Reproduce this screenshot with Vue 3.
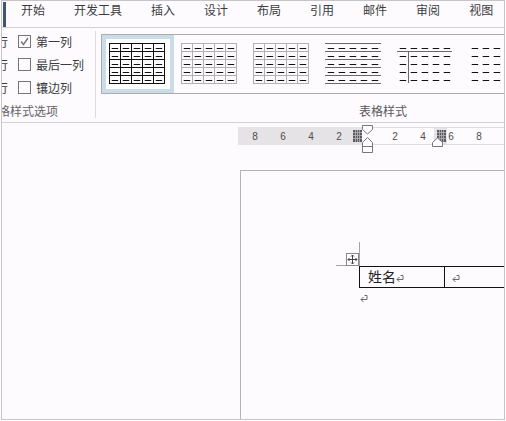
<script setup>
import { ref } from 'vue'

const tabs = ['开始', '开发工具', '插入', '设计', '布局', '引用', '邮件', '审阅', '视图']

const options = ref([
  { label: '第一列', checked: true },
  { label: '最后一列', checked: false },
  { label: '镶边列', checked: false },
])

const styles = ['grid', 'light', 'light', 'rows', 'corner', 'plain']
const selected = ref(0)

const ticks = [8, 6, 4, 2, '', 2, 4, 6, 8]

const range = (n) => Array.from({ length: n }, (_, i) => i)
const dashes = range(5)
  .map((r) => range(5).map((c) => `M${c * 11 + 2.7} ${r * 8 + 5.5}h6.500`).join(''))
  .join('')
const hLines = range(6).map((r) => `M0 ${r * 8 + 0.5}h56`).join('')
const vLines = range(6).map((c) => `M${c * 11 + 0.5} 0v41`).join('')

const linePaths = {
  grid: hLines + vLines,
  light: hLines + vLines,
  rows: hLines,
  corner: 'M0 8.5h55M11.5 8v32',
  plain: '',
}
</script>

<template>
  <div class="window">
    <nav class="tabs">
      <span class="tabs__file"></span>
      <a v-for="tab in tabs" :key="tab" class="tabs__item">{{ tab }}</a>
    </nav>

    <section class="ribbon">
      <div class="options">
        <div v-for="(option, i) in options" :key="i" class="options__row">
          <span class="options__clipped">行</span>
          <span class="options__box" @click="option.checked = !option.checked">
            <svg v-if="option.checked" width="11" height="11" viewBox="0 0 11 11">
              <path d="M2 5.5l2.500 3L9 2" fill="none" stroke="#777" stroke-width="1.4" />
            </svg>
          </span>
          <span>{{ option.label }}</span>
        </div>
        <div class="options__title"><span>表格样式选项</span></div>
      </div>

      <div class="styles">
        <div class="gallery">
          <div
            v-for="(style, i) in styles"
            :key="i"
            class="gallery__item"
            :class="[`gallery__item--${style}`, { 'gallery__item--selected': i === selected }]"
            @click="selected = i"
          >
            <svg width="56" height="41" viewBox="0 0 56 41">
              <path class="gallery__lines" :d="linePaths[style]" />
              <path class="gallery__dashes" :d="dashes" />
            </svg>
          </div>
        </div>
        <div class="styles__title">表格样式</div>
      </div>
    </section>

    <div class="ruler">
      <div class="ruler__margin"></div>
      <div class="ruler__body"></div>
      <div class="ruler__ticks">
        <span v-for="(tick, i) in ticks" :key="i">{{ tick }}</span>
      </div>
      <svg class="ruler__markers" width="100" height="30" viewBox="0 0 100 30">
        <rect x="82" y="4" width="13" height="16" fill="#e3e2e5" />
        <path d="M1 6h9v12h-9zM85 6h9v12h-9z" fill="#5c5a5e" />
        <path
          d="M3.500 6v12M5.500 6v12M7.500 6v12M1 8.500h9M1 11.500h9M1 14.500h9M87.500 6v12M89.500 6v12M91.500 6v12M85 8.500h9M85 11.500h9M85 14.500h9"
          stroke="#b5b4b7"
          stroke-width=".8"
        />
        <g fill="#fefdff" stroke="#77767a">
          <path d="M10.500 1.500h10v4l-5 4.500l-5-4.500z" />
          <path d="M10.500 28.500v-10l5-5l5 5v10zM10.500 22.500h10" />
          <path d="M80.500 22.500v-4l5-4.500l5 4.500v4z" />
        </g>
      </svg>
    </div>

    <main class="workspace">
      <div class="page">
        <svg class="page__handle" width="25" height="25" viewBox="0 0 25 25">
          <path d="M23.500 0v24M0 23.500h24" stroke="#a5a3a7" />
          <rect x="10.500" y="11.500" width="12" height="12" fill="#fefdff" stroke="#8a898c" />
          <path
            d="M16.500 13v9M12 17.500h9M15 14.500l1.500-1.500l1.500 1.500M15 20.500l1.500 1.500l1.500-1.500M13.500 16l-1.500 1.500l1.500 1.500M19.500 16l1.500 1.500l-1.500 1.500"
            fill="none"
            stroke="#444"
          />
        </svg>
        <div class="table">
          <div class="table__cell table__cell--name">
            <span>姓名</span>
            <svg class="mark" width="8" height="8" viewBox="0 0 8 8">
              <path d="M4.500 .5h2.500v4h-6M3.500 2l-2.500 2.500l2.500 2.500" />
            </svg>
          </div>
          <div class="table__cell">
            <svg class="mark" width="8" height="8" viewBox="0 0 8 8">
              <path d="M4.500 .5h2.500v4h-6M3.500 2l-2.500 2.500l2.500 2.500" />
            </svg>
          </div>
        </div>
        <svg class="mark mark--end" width="8" height="8" viewBox="0 0 8 8">
          <path d="M4.500 .5h2.500v4h-6M3.500 2l-2.500 2.500l2.500 2.500" />
        </svg>
      </div>
    </main>
  </div>
</template>

<style>
body {
  background: #fff;
}
</style>

<style scoped>
.window {
  box-sizing: border-box;
  display: flex;
  flex-direction: column;
  width: 504px;
  height: 420px;
  margin-left: 1px;
  border: 1px solid #c6c4c8;
  background: #fdfbfe;
  color: #3c3b3e;
  font-family: 'Liberation Sans', 'Noto Sans CJK SC', sans-serif;
  font-size: 12px;
  overflow: hidden;
}

/* Tabs */
.tabs {
  display: flex;
  flex-shrink: 0;
  gap: 29px;
  height: 26px;
  border-bottom: 1px solid #d3d1d5;
  line-height: 21px;
  white-space: nowrap;
}

.tabs__file {
  width: 3px;
  height: 25px;
  margin: 1px -14px 0 1px;
  background: #3d5576;
}

/* Ribbon */
.ribbon {
  display: flex;
  flex-shrink: 0;
  height: 94px;
  border-bottom: 1px solid #d3d1d5;
}

.options {
  box-sizing: border-box;
  flex-shrink: 0;
  width: 94px;
  height: 87px;
  margin-top: 3px;
  border-right: 1px solid #dddbdf;
}

.options__row {
  display: flex;
  align-items: center;
  height: 23px;
  white-space: nowrap;
}

.options__row:first-child {
  margin-top: -1px;
}

.options__clipped {
  display: flex;
  justify-content: flex-end;
  width: 6px;
  overflow: hidden;
}

.options__box {
  box-sizing: border-box;
  display: flex;
  width: 13px;
  height: 13px;
  margin: 0 5px 0 10px;
  border: 1px solid #777579;
}

.options__title {
  display: flex;
  justify-content: flex-end;
  width: 56px;
  margin-top: 3px;
  overflow: hidden;
  color: #656367;
  line-height: 20px;
  white-space: nowrap;
}

.styles {
  flex: 1;
  min-width: 0;
  padding: 6px 0 0 5px;
}

.gallery {
  box-sizing: border-box;
  display: flex;
  height: 60px;
  border: 1px solid #adabb0;
  border-right: none;
  overflow: hidden;
}

.gallery__item {
  box-sizing: border-box;
  flex: 0 0 72px;
  height: 58px;
  padding: 8px 0 0 7px;
}

.gallery__item--selected {
  padding: 4px 0 0 3px;
  border: 4px solid #c9dce7;
  background: #fff;
}

.gallery__item svg {
  display: block;
}

.gallery__lines {
  fill: none;
  stroke: #b2b0b4;
}

.gallery__item--grid .gallery__lines {
  stroke: #111;
}

.gallery__item--rows .gallery__lines,
.gallery__item--corner .gallery__lines {
  stroke: #69676b;
}

.gallery__dashes {
  stroke: #111;
  stroke-width: 1.1;
}

.styles__title {
  margin-top: 8px;
  padding-left: 258px;
  color: #59575b;
  line-height: 20px;
}

/* Ruler */
.ruler {
  position: relative;
  display: flex;
  flex-shrink: 0;
  height: 18px;
  margin: 4px 0 0 236px;
}

.ruler__margin {
  width: 124px;
  background: #e5e3e6;
}

.ruler__body {
  box-sizing: border-box;
  flex: 1;
  border: solid #dfdde1;
  border-width: 1px 0;
}

.ruler__ticks {
  position: absolute;
  inset: 0;
  display: flex;
  padding-left: 3px;
  color: #4d4b4f;
  font-size: 10px;
  line-height: 19px;
}

.ruler__ticks span {
  flex: 0 0 28px;
  text-align: center;
}

.ruler__markers {
  position: absolute;
  top: -3px;
  left: 114px;
}

/* Document */
.workspace {
  flex: 1;
  min-height: 0;
  padding: 25px 0 0 238px;
}

.page {
  position: relative;
  box-sizing: border-box;
  height: 100%;
  padding: 95px 0 0 118px;
  border: solid #b5b3b7;
  border-width: 1px 0 0 1px;
}

.page__handle {
  position: absolute;
  top: 71px;
  left: 95px;
}

.table {
  position: relative;
  display: flex;
  box-sizing: border-box;
  height: 22px;
  border: 1px solid #111;
  border-right: none;
}

.table__cell {
  display: flex;
  align-items: center;
  padding-left: 7px;
}

.table__cell--name {
  box-sizing: border-box;
  width: 85px;
  padding-left: 8px;
  border-right: 1px solid #111;
  color: #222;
  font-size: 14px;
  line-height: 20px;
}

.mark {
  display: block;
  margin-top: 3px;
  fill: none;
  stroke: #6a686d;
}

.mark--end {
  margin: 7px 0 0 1px;
}
</style>
